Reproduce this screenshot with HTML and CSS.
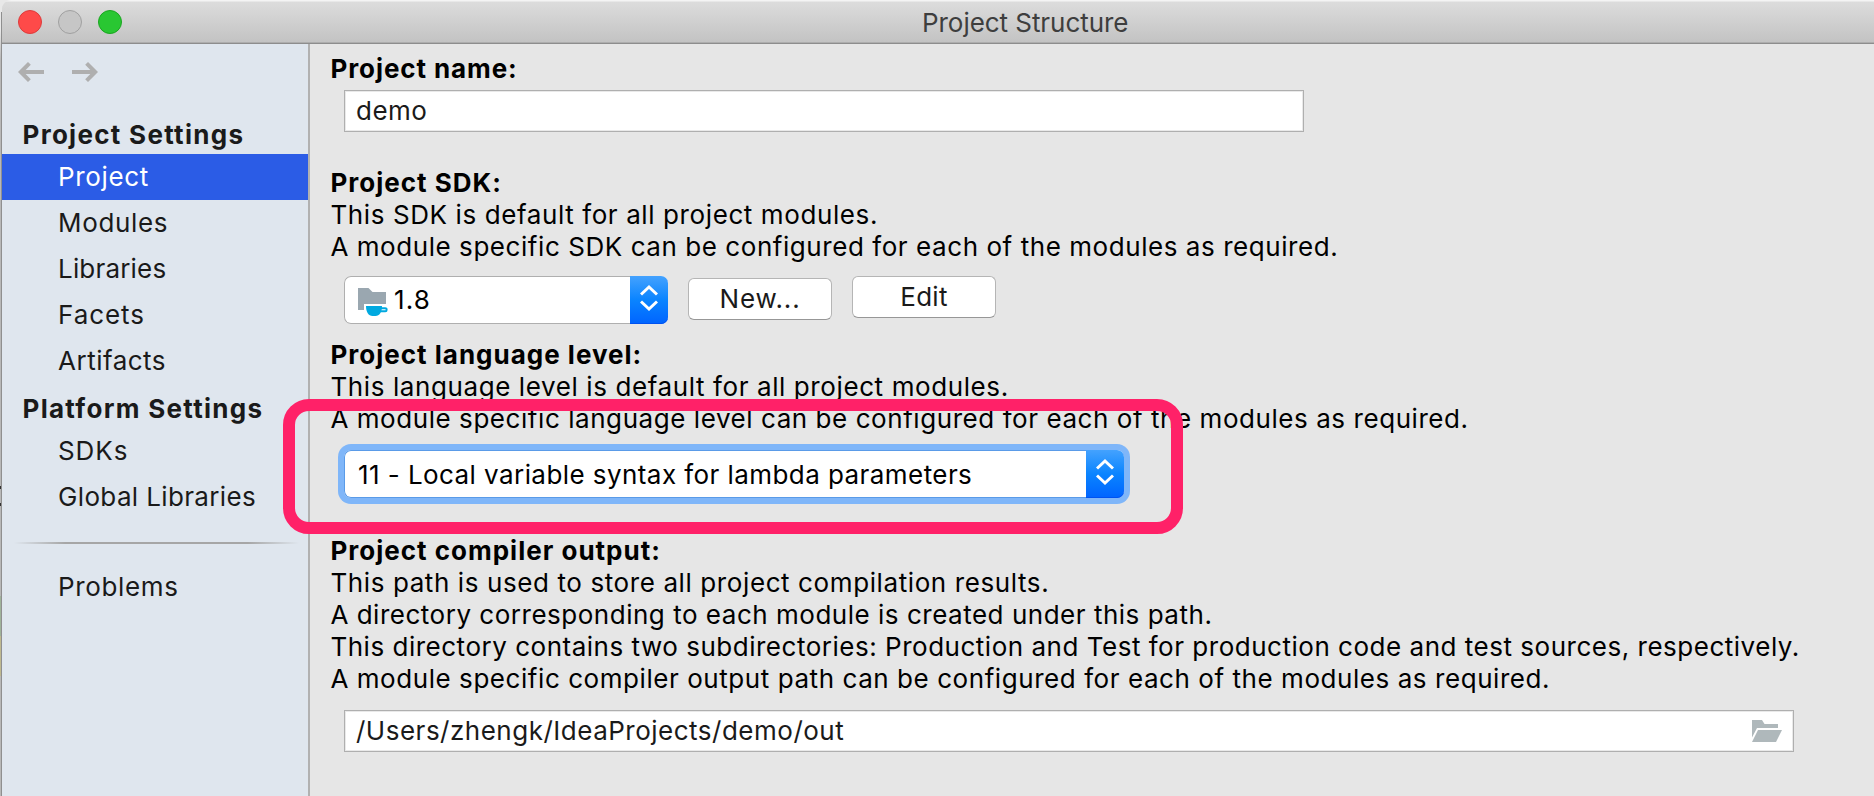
FILE: index.html
```html
<!DOCTYPE html>
<html lang="en">
<head>
<meta charset="utf-8">
<title>Project Structure</title>
<link rel="stylesheet" href="styles.css">
</head>
<body>
<div class="backdrop">
  <div class="window">
    <header class="titlebar">
      <div class="lights">
        <span class="light light-close"></span>
        <span class="light light-min"></span>
        <span class="light light-zoom"></span>
      </div>
      <div class="title">Project Structure</div>
    </header>
    <div class="body">
      <aside class="sidebar">
        <div class="nav-arrows">
          <svg class="arrow" width="26" height="20" viewBox="0 0 26 20"><path d="M26 10H3M11.4 1.4L2.8 10l8.600 8.600" fill="none" stroke="#afafaf" stroke-width="4"/></svg>
          <svg class="arrow" width="26" height="20" viewBox="0 0 26 20"><path d="M0 10h23M14.6 1.4l8.600 8.600-8.600 8.600" fill="none" stroke="#afafaf" stroke-width="4"/></svg>
        </div>
        <h2 class="group">Project Settings</h2>
        <nav class="items">
          <a class="item item-active">Project</a>
          <a class="item">Modules</a>
          <a class="item ls-tight">Libraries</a>
          <a class="item ls-wide">Facets</a>
          <a class="item ls-mid">Artifacts</a>
        </nav>
        <h2 class="group group-second">Platform Settings</h2>
        <nav class="items">
          <a class="item ls-wide">SDKs</a>
          <a class="item ls-snug">Global Libraries</a>
        </nav>
        <div class="divider"></div>
        <nav class="items">
          <a class="item">Problems</a>
        </nav>
      </aside>
      <main class="content">
        <section>
          <h3 class="label ls-name">Project name:</h3>
          <div class="field field-name">demo</div>
        </section>
        <section class="section-sdk">
          <h3 class="label">Project SDK:</h3>
          <p class="text ls-intro">This SDK is default for all project modules.</p>
          <p class="text">A module specific SDK can be configured for each of the modules as required.</p>
          <div class="row">
            <div class="select select-sdk">
              <div class="select-value">
                <svg class="sdk-icon" width="32" height="28" viewBox="0 0 32 28">
                  <path d="M0 0h10.500l4 4H28v12H6v6H0z" fill="#9aa7b0"/>
                  <path d="M8 18h16c0 6-2.500 10-6.500 10h-3C10.500 28 8 24 8 18z" fill="#00a9e0"/>
                  <path d="M23 20.200h4.300a1.300 1.300 0 0 1 1.300 1.300v.4a1.300 1.300 0 0 1-1.300 1.300H22" fill="none" stroke="#00a9e0" stroke-width="2"/>
                </svg>
                <span class="ls-version">1.8</span>
              </div>
              <div class="stepper"><svg width="18" height="28" viewBox="0 0 18 28"><path d="M1 10.500L9 3l8 7.500M1 17.500L9 25l8-7.500" fill="none" stroke="#fff" stroke-width="3"/></svg></div>
            </div>
            <div class="button button-new">New...</div>
            <div class="button button-edit">Edit</div>
          </div>
        </section>
        <section class="section-level">
          <h3 class="label">Project language level:</h3>
          <p class="text ls-intro">This language level is default for all project modules.</p>
          <p class="text">A module specific language level can be configured for each of the modules as required.</p>
          <div class="select select-level">
            <div class="select-value ls-level">11 - Local variable syntax for lambda parameters</div>
            <div class="stepper"><svg width="18" height="28" viewBox="0 0 18 28"><path d="M1 10.500L9 3l8 7.500M1 17.500L9 25l8-7.500" fill="none" stroke="#fff" stroke-width="3"/></svg></div>
          </div>
        </section>
        <section class="section-output">
          <h3 class="label">Project compiler output:</h3>
          <p class="text ls-intro">This path is used to store all project compilation results.</p>
          <p class="text ls-dense">A directory corresponding to each module is created under this path.</p>
          <p class="text ls-dense">This directory contains two subdirectories: Production and Test for production code and test sources, respectively.</p>
          <p class="text">A module specific compiler output path can be configured for each of the modules as required.</p>
          <div class="field field-path">
            <span>/Users/zhengk/IdeaProjects/demo/out</span>
            <svg width="30" height="22" viewBox="0 0 30 22"><path d="M0 0h10l2.500 4H26v4H5L0 17.500z" fill="#afb8bb"/><path d="M6 10h24l-6 12H0z" fill="#afb8bb"/></svg>
          </div>
        </section>
      </main>
    </div>
  </div>
  <div class="highlight"></div>
</div>
</body>
</html>
```
FILE: styles.css
```css
* { box-sizing: border-box; }

body {
  margin: 0;
  font-family: Inter, "Liberation Sans", sans-serif;
  font-size: 26px;
  line-height: 32px;
  color: #000;
}

h2, h3, p { margin: 0; font-size: 26px; }

.backdrop {
  position: relative;
  width: 1874px;
  height: 796px;
  overflow: hidden;
  padding-left: 2px;
  background:
    linear-gradient(90deg, transparent 1px, #8f8f8f 1px, #8f8f8f 2px, transparent 2px) 0 12px no-repeat,
    linear-gradient(#e8e8e8 0, #e8e8e8 30px, #b8b8b8 60px, #b8b8b8 486px, #333 486px, #333 489px, #b8b8b8 489px, #b8b8b8 503px, #333 503px, #333 506px, #b8b8b8 506px, #b8b8b8 596px, #9fb39a 596px, #9fb39a 636px, #bfb98f 636px, #bfb98f 676px, #b8b8b8 676px);
}

.window {
  display: flex;
  flex-direction: column;
  height: 796px;
  border-top-left-radius: 9px;
  overflow: hidden;
  background: #e6e6e6;
}

.titlebar {
  display: grid;
  grid-template-columns: 904px auto 1fr;
  align-items: center;
  flex: none;
  height: 44px;
  padding-left: 16px;
  background: linear-gradient(#f4f4f4 0, #f4f4f4 1px, #dcdcdc 2px, #c3c3c3 42px);
  border-bottom: 1px solid #8d8d8d;
  box-shadow: inset 0 -1px #adadad;
}

.lights { display: flex; gap: 16px; }
.light { width: 24px; height: 24px; border-radius: 50%; border: 1px solid; }
.light-close { background: #fe4a49; border-color: #dd3b3b; }
.light-min { background: #c6c6c6; border-color: #a0a0a0; }
.light-zoom { background: #29c732; border-color: #1aa620; }

.title {
  padding-top: 2px;
  color: #3e3e3e;
  letter-spacing: -0.05px;
}

.body { display: flex; flex: 1; }

.sidebar {
  flex: none;
  width: 308px;
  padding-top: 18px;
  background: #dfe6ee;
  border-right: 2px solid #b1b1b1;
  color: #1a1a1a;
}

.nav-arrows { display: flex; gap: 28px; padding-left: 16px; height: 20px; }
.arrow { display: block; }

.group {
  height: 46px;
  margin-top: 26px;
  padding: 11px 0 0 20.500px;
  letter-spacing: 1.29px;
}
.group-second { height: 44px; margin-top: 0; padding-top: 9px; }

.items { display: flex; flex-direction: column; }
.item {
  height: 46px;
  padding: 7px 0 0 56px;
  letter-spacing: 0.65px;
  white-space: nowrap;
}
.item-active { background: #2b5ce6; color: #fff; }

.divider {
  height: 2px;
  margin: 22px 9px 20px 12px;
  background: linear-gradient(90deg, rgba(166,166,166,0), #a6a6a6 18%, #a6a6a6 82%, rgba(166,166,166,0));
}

.content { flex: 1; padding: 9px 0 0 20px; white-space: nowrap; }

.label { padding-left: 0.500px; font-weight: 700; letter-spacing: 1px; }
.text { padding-left: 0.400px; letter-spacing: 0.56px; }

.ls-tight { letter-spacing: 0.18px; }
.ls-snug { letter-spacing: 0.36px; }
.ls-mid { letter-spacing: 0.5px; }
.ls-wide { letter-spacing: 0.93px; }
.ls-name { letter-spacing: 0.9px; }
.ls-intro { letter-spacing: 0.6px; }
.ls-dense { letter-spacing: 0.515px; }
.ls-level { letter-spacing: 0.43px; }
.ls-version { letter-spacing: 1.1px; }

.field {
  display: flex;
  align-items: center;
  height: 42px;
  margin-left: 14px;
  padding: 0 11px;
  background: #fff;
  border: 1px solid #afafaf;
  box-shadow: inset 0 0 0 1px #e9e9e9;
  color: #1a1a1a;
  letter-spacing: 0.5px;
}
.field-name { width: 960px; margin-top: 5px; }
.field-path {
  width: 1450px;
  margin-top: 15px;
  justify-content: space-between;
}

.section-sdk { margin-top: 35px; }
.section-level { margin-top: 15px; }
.section-output { margin-top: 37px; }

.row { display: flex; margin: 13px 0 0 14px; height: 48px; }

.select {
  display: flex;
  height: 48px;
  background: #fff;
  border-radius: 7px;
}
.select-value {
  display: flex;
  flex: 1;
  align-items: center;
  padding: 2px 0 0 13px;
  border: 1px solid #afafaf;
  border-right: 0;
  border-radius: 7px 0 0 7px;
}
.select-sdk { width: 324px; }
.select-sdk .select-value { padding-top: 0; }
.sdk-icon { margin-top: 4px; }
.select-sdk .ls-version { margin-left: 4px; }

.select-level {
  width: 780px;
  margin: 15px 0 0 14px;
  box-shadow: 0 0 0 6px #7fb6f9;
}
.select-level .select-value { border-color: #5a9be8; }

.stepper {
  display: flex;
  align-items: center;
  justify-content: center;
  width: 38px;
  padding-bottom: 4px;
  border-radius: 0 7px 7px 0;
  background: linear-gradient(#44a2fe, #0a84ff 50%, #0064ff);
  box-shadow: inset 0 -1px #0052f0;
}

.button {
  width: 144px;
  height: 42px;
  padding-top: 4px;
  border: 1px solid #b5b5b5;
  border-bottom-color: #979797;
  border-radius: 6px;
  background: #fff;
  color: #1a1a1a;
  text-align: center;
}
.button-new { margin: 2px 0 0 20px; letter-spacing: 0.8px; }
.button-edit { margin-left: 20px; letter-spacing: 0.3px; }

/* Annotation frame drawn over the window */
.highlight {
  position: absolute;
  left: 283px;
  top: 399px;
  width: 900px;
  height: 135px;
  border: 12px solid #ff2168;
  border-radius: 26px;
}
```
